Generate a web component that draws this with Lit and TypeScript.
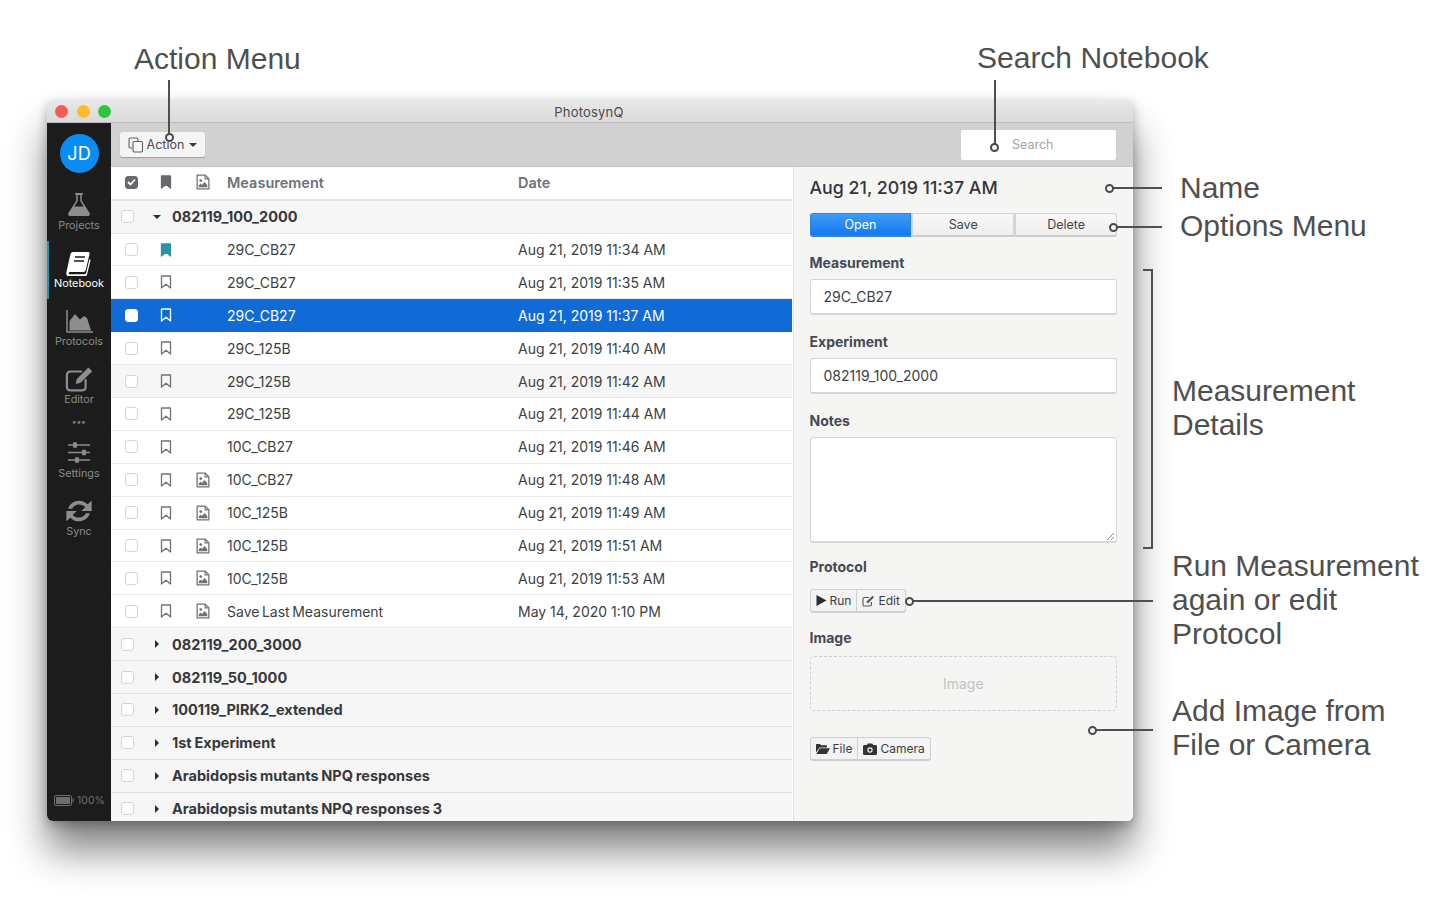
import {LitElement, html, css, svg, nothing} from 'lit';
import {customElement} from 'lit/decorators.js';

const bookmark = (color: string, filled = false) => html`
  <svg class="ico" width="12" height="14" viewBox="0 0 12 14">
    <path d="M1.500 1h9v12L6 9.200 1.500 13z" fill=${filled ? color : 'none'} stroke=${color} stroke-width="1.300" stroke-linejoin="round"/>
  </svg>`;

const imageFile = (color = '#6f7277') => html`
  <svg class="ico" width="14" height="16" viewBox="0 0 13 15">
    <path d="M1 1h7.500L12 4.500V14H1z" fill="none" stroke=${color} stroke-width="1.200"/>
    <path d="M8.500 1v3.500H12" fill="none" stroke=${color} stroke-width="1.100"/>
    <circle cx="4.400" cy="6.200" r="1.300" fill=${color}/>
    <path d="M2.500 12.500V10.800L4.200 9l1.300 1.200L8 7.600l2.500 2.600v2.300z" fill=${color}/>
  </svg>`;

const checkbox = (kind = '') => html`<span class="cb ${kind}"></span>`;

interface Row { name: string; date: string; mark?: boolean; img?: boolean; sel?: boolean; alt?: boolean; }

const ROWS: Row[] = [
  {name: '29C_CB27', date: 'Aug 21, 2019 11:34 AM', mark: true},
  {name: '29C_CB27', date: 'Aug 21, 2019 11:35 AM'},
  {name: '29C_CB27', date: 'Aug 21, 2019 11:37 AM', sel: true},
  {name: '29C_125B', date: 'Aug 21, 2019 11:40 AM'},
  {name: '29C_125B', date: 'Aug 21, 2019 11:42 AM', alt: true},
  {name: '29C_125B', date: 'Aug 21, 2019 11:44 AM'},
  {name: '10C_CB27', date: 'Aug 21, 2019 11:46 AM'},
  {name: '10C_CB27', date: 'Aug 21, 2019 11:48 AM', img: true},
  {name: '10C_125B', date: 'Aug 21, 2019 11:49 AM', img: true},
  {name: '10C_125B', date: 'Aug 21, 2019 11:51 AM', img: true},
  {name: '10C_125B', date: 'Aug 21, 2019 11:53 AM', img: true},
  {name: 'Save Last Measurement', date: 'May 14, 2020 1:10 PM', img: true},
];

const GROUPS = [
  '082119_200_3000',
  '082119_50_1000',
  '100119_PIRK2_extended',
  '1st Experiment',
  'Arabidopsis mutants NPQ responses',
  'Arabidopsis mutants NPQ responses 3',
];

const NAV = [
  {label: 'Projects', icon: svg`<path d="M10 1h8v1.600h-1.200v6.200L24.600 21c.9 1.500 0 3-1.700 3H5.100c-1.700 0-2.600-1.500-1.700-3l7.800-12.200V2.600H10z" fill="#8d8d8d"/><path d="M12.700 3v6.300L9.300 14.500h9.400L15.300 9.300V3z" fill="#1c1c1c"/>`},
  {label: 'Notebook', active: true, icon: svg`<path d="M8 2h15c1.300 0 1.800 1 1.500 2.200l-3.700 15.500c-.4 1.500-1.300 2.300-3 2.300H5.500c-2 0-2.700 1.800-1 2.200h14.700c1 0 1.700-.5 2-1.500l3.200-13.400 1.200.8-3.400 14c-.4 1.700-1.500 2.700-3.300 2.700H5c-3 0-4.200-2.400-3.500-5L5.300 4.800C5.700 3 6.500 2 8 2z" fill="#fff"/><path d="M10 7h10M9 11h10" stroke="#1c1c1c" stroke-width="1.500"/>`},
  {label: 'Protocols', icon: svg`<path d="M2 2v22h26" fill="none" stroke="#8d8d8d" stroke-width="1.500"/><path d="M4.500 22.500V13L10 6l5 5.500 4-3.500 3 2 4 12.500z" fill="#8d8d8d"/>`},
  {label: 'Editor', icon: svg`<g transform="translate(-1.400 -1.300) scale(1.100)"><path d="M20 14v6c0 2-1.300 3.300-3.300 3.300H6.300C4.300 23.300 3 22 3 20V9.500c0-2 1.300-3.300 3.300-3.300H16" fill="none" stroke="#8d8d8d" stroke-width="2" stroke-linecap="round"/><path d="M22.500 2.500l3.500 3.500-10.500 10.500-4.500 1 1-4.500z" fill="#8d8d8d"/></g>`},
  {label: 'dots'},
  {label: 'Settings', icon: svg`<path d="M3 5h22M3 12.500h22M3 20h22" stroke="#8d8d8d" stroke-width="1.700"/><rect x="8" y="2.300" width="4" height="5.400" rx=".8" fill="#8d8d8d"/><rect x="17" y="9.800" width="4" height="5.400" rx=".8" fill="#8d8d8d"/><rect x="10" y="17.300" width="4" height="5.400" rx=".8" fill="#8d8d8d"/>`},
  {label: 'Sync', icon: svg`<g transform="translate(-2.100 -1.950) scale(1.150)"><path d="M4.500 11C6 6.500 10 4 14 4c3 0 5.500 1.200 7.500 3.200L25 4v9h-9l3.500-3.400C18 8 16.200 7.300 14 7.300c-2.800 0-5 1.500-6 3.700zM23.500 15c-1.500 4.500-5.500 7-9.500 7-3 0-5.500-1.200-7.500-3.200L3 22v-9h9l-3.500 3.400C10 18 11.800 18.700 14 18.700c2.800 0 5-1.500 6-3.700z" fill="#8d8d8d"/></g>`},
];

@customElement('app-root')
export class AppRoot extends LitElement {
  static styles = css`
    :host {
      display: block;
      position: relative;
      width: 1440px;
      height: 900px;
      padding: 100px 0 0 47px;
      box-sizing: border-box;
      background: #fff;
      overflow: hidden;
      font-family: Inter, 'Liberation Sans', sans-serif;
      color: #3a3d42;
      -webkit-font-smoothing: antialiased;
    }
    .window {
      width: 1086px;
      height: 721px;
      border-radius: 6px;
      overflow: hidden;
      display: flex;
      flex-direction: column;
      background: #f5f5f4;
      box-shadow: 0 30px 38px rgba(0, 0, 0, 0.48), 0 4px 12px rgba(0, 0, 0, 0.28);
    }
    .titlebar {
      height: 23px;
      flex: none;
      position: relative;
      background: linear-gradient(#e9e9e9, #d9d9d9);
      border-bottom: 1px solid #bdbdbd;
      box-sizing: border-box;
      text-align: center;
      font-size: 13px;
      line-height: 24px;
      color: #4a4a4a;
      letter-spacing: 0.2px;
      padding-right: 2px;
    }
    .lights { position: absolute; left: 8px; top: 5px; display: flex; gap: 8.500px; }
    .lights i { width: 13px; height: 13px; border-radius: 50%; display: block; }
    .body { flex: 1; display: flex; min-height: 0; }
    .side {
      width: 64px;
      flex: none;
      background: #1c1c1c;
      display: flex;
      flex-direction: column;
      align-items: center;
      position: relative;
      padding-top: 11px;
      box-sizing: border-box;
    }
    .avatar {
      width: 39px;
      height: 39px;
      border-radius: 50%;
      background: #0a8cf5;
      color: #fff;
      font-size: 18px;
      display: flex;
      align-items: center;
      justify-content: center;
      margin-bottom: 16px;
    }
    .nav {
      width: 64px;
      height: 58px;
      box-sizing: border-box;
      display: flex;
      flex-direction: column;
      align-items: center;
      gap: 1px;
      font-size: 10.800px;
      color: #8a8a8a;
      padding-top: 3px;
      position: relative;
    }
    .nav svg { display: block; }
    .nav.active { color: #fff; }
    .nav.active::before {
      content: '';
      position: absolute;
      left: 0;
      top: -6px;
      width: 2px;
      height: 58px;
      background: #2a93a8;
    }
    .dots { height: 19px; margin-top: -3px; color: #7c7c7c; font-size: 9px; line-height: 8px; letter-spacing: 0.4px; font-weight: 700; }
    .battery {
      position: absolute;
      bottom: 14px;
      left: 7px;
      display: flex;
      align-items: center;
      gap: 3px;
      font-size: 10.500px;
      color: #6d6d6d;
    }
    .main { flex: 1; display: flex; flex-direction: column; min-width: 0; }
    .toolbar {
      height: 44px;
      flex: none;
      box-sizing: border-box;
      background: #d1d1d1;
      border-bottom: 1px solid #c4c4c4;
      display: flex;
      align-items: center;
      justify-content: space-between;
      padding: 0 17px 0 9px;
    }
    .action {
      height: 25px;
      width: 85px;
      box-sizing: border-box;
      border-radius: 3px;
      background: #f5f5f5;
      box-shadow: 0 1px 1px rgba(0, 0, 0, 0.25);
      display: flex;
      align-items: center;
      justify-content: center;
      gap: 3px;
      font-size: 12.500px;
      color: #4c4c4c;
    }
    .caret { width: 0; height: 0; border: 4.500px solid transparent; border-top-color: #3c3c3c; border-bottom: 0; margin-left: 2px; }
    .search {
      width: 155px;
      height: 30px;
      background: #fff;
      border-radius: 2px;
      box-sizing: border-box;
      font-size: 12.500px;
      color: #a3a3a3;
      line-height: 30px;
      padding-left: 51px;
    }
    .content { flex: 1; display: flex; min-height: 0; }
    .list { width: 682px; flex: none; background: #fff; overflow: hidden; padding-right: 1px; box-sizing: border-box; }
    .row {
      height: 32.900px;
      box-sizing: border-box;
      display: grid;
      grid-template-columns: 116px 291px 1fr;
      align-items: center;
      border-bottom: 1px solid #e8e8e8;
      font-size: 14px;
      color: #3c3f44;
    }
    .row .name { word-spacing: -1.400px; }
    .row.alt { background: #f6f6f6; }
    .row.sel { background: #116bd6; color: #fff; border-bottom-color: #116bd6; }
    .head {
      height: 33.700px;
      padding-bottom: 1px;
      border-bottom: 2px solid #e4e4e4;
      color: #6e7177;
      font-weight: 600;
      font-size: 14.500px;
    }
    .icons { display: flex; align-items: center; padding-left: 14px; }
    .icons .slot1 { width: 14px; display: flex; }
    .icons .slot2 { width: 36px; margin-left: 21px; display: flex; }
    .icons .slot3 { width: 16px; display: flex; }
    .group {
      height: 32.900px;
      box-sizing: border-box;
      display: flex;
      align-items: center;
      background: #f6f6f6;
      border-bottom: 1px solid #e2e2e2;
      font-weight: 700;
      font-size: 14.500px;
      word-spacing: -0.700px;
      color: #35383c;
      padding-left: 10px;
    }
    .group .arrow { width: 14px; margin-left: 16px; margin-right: 8px; display: flex; justify-content: center; }
    .down { width: 0; height: 0; border: 4.500px solid transparent; border-top-color: #2c2c2c; border-bottom: 0; }
    .right { width: 0; height: 0; border: 4.500px solid transparent; border-left-color: #2c2c2c; border-right: 0; }
    .cb {
      width: 13px;
      height: 13px;
      box-sizing: border-box;
      border: 1px solid #d4d4d4;
      border-radius: 3px;
      background: #fff;
      display: block;
    }
    .cb.on { background: #fff; border-color: #fff; }
    .cb.checked {
      background: #66696e;
      border-color: #66696e;
      display: flex;
      align-items: center;
      justify-content: center;
    }
    .ico { display: block; flex: none; }
    .detail {
      flex: 1;
      background: #f5f5f4;
      border-left: 1px solid #dedede;
      padding: 10px 16px 0 15.500px;
      box-sizing: border-box;
      min-width: 0;
    }
    h1 { margin: 0 0 14px; font-size: 17.800px; line-height: 22px; font-weight: 500; color: #33363a; }
    .segs { display: flex; height: 24px; margin-bottom: 17px; font-size: 12.500px; }
    .segs span {
      flex: 1;
      display: flex;
      align-items: center;
      justify-content: center;
      background: linear-gradient(#f8f8f8, #eeeeee);
      border: 1px solid #d5d5d5;
      border-bottom: 2px solid #cccccc;
      color: #444;
      box-sizing: border-box;
    }
    .segs span + span { border-left-width: 2px; }
    .segs .open { background: linear-gradient(#3d9bfa, #1479ee); color: #fff; border-color: #2d84e4; border-radius: 3px 0 0 3px; }
    .segs span:last-child { border-radius: 0 3px 3px 0; }
    label { display: block; font-size: 14px; line-height: 18px; font-weight: 700; color: #454953; }
    .input {
      height: 36px;
      margin-top: 7px;
      margin-bottom: 18px;
      box-sizing: border-box;
      background: #fff;
      border: 1px solid #d6d6d6;
      border-bottom-width: 2px;
      border-radius: 3px;
      padding-left: 13px;
      font-size: 14px;
      line-height: 34px;
      color: #3e4146;
    }
    .notes { position: relative; height: 106px; margin-top: 7px; margin-bottom: 15px; }
    .grip { position: absolute; right: 1px; bottom: 0; }
    .btns { display: inline-flex; height: 24px; font-size: 12px; color: #3d3d3d; border: 1px solid #cfcfcf; border-bottom-width: 2px; border-radius: 3px; box-sizing: border-box; background: #f3f3f3; }
    .btns span { display: flex; align-items: center; gap: 3px; padding: 0 5px; }
    .btns span + span { border-left: 1px solid #cfcfcf; }
    .proto { margin-top: 13px; margin-bottom: 16px; }
    .drop {
      height: 55px;
      margin-top: 9px;
      border: 1px dashed #cfcfcf;
      border-radius: 4px;
      box-sizing: border-box;
      display: flex;
      align-items: center;
      justify-content: center;
      font-size: 14px;
      color: #c3c3c3;
      margin-bottom: 26px;
    }
    .callout { position: absolute; font-family: 'Liberation Sans', Arial, sans-serif; font-size: 30px; line-height: 34px; color: #4f4f4f; white-space: nowrap; }
    .line { position: absolute; background: #4f4f4f; }
    .dot { position: absolute; width: 5px; height: 5px; border: 2px solid #4a4a4a; border-radius: 50%; background: #f5f5f5; }
    .bracket { position: absolute; left: 1143px; top: 269px; width: 10px; height: 280px; border: 2px solid #4f4f4f; border-left: 0; box-sizing: border-box; }
  `;

  private _nav(n: (typeof NAV)[number]) {
    if (n.label === 'dots') return html`<div class="dots">•••</div>`;
    return html`
      <div class="nav ${n.active ? 'active' : ''}">
        <svg width="28" height="26" viewBox="0 0 28 26">${n.icon}</svg>
        <span>${n.label}</span>
      </div>`;
  }

  private _row(r: Row) {
    const c = r.sel ? '#fff' : '#6f7277';
    return html`
      <div class="row ${r.sel ? 'sel' : ''} ${r.alt ? 'alt' : ''}">
        <div class="icons">
          <span class="slot1">${checkbox(r.sel ? 'on' : '')}</span>
          <span class="slot2">${r.mark ? bookmark('#2a93a8', true) : bookmark(c)}</span>
          <span class="slot3">${r.img ? imageFile() : nothing}</span>
        </div>
        <span class="name">${r.name}</span>
        <span>${r.date}</span>
      </div>`;
  }

  render() {
    return html`
      <div class="window">
        <div class="titlebar">
          <div class="lights"><i style="background:#f25f57"></i><i style="background:#fbbc2e"></i><i style="background:#29c73f"></i></div>
          PhotosynQ
        </div>
        <div class="body">
          <div class="side">
            <div class="avatar">JD</div>
            ${NAV.map((n) => this._nav(n))}
            <div class="battery">
              <svg width="20" height="11" viewBox="0 0 20 11"><rect x=".5" y=".5" width="17" height="10" rx="1.500" fill="none" stroke="#6d6d6d"/><rect x="2" y="2" width="14" height="7" fill="#6d6d6d"/><rect x="18.500" y="3.500" width="1.200" height="4" fill="#6d6d6d"/></svg>
              100%
            </div>
          </div>
          <div class="main">
            <div class="toolbar">
              <div class="action">
                <svg width="16" height="16" viewBox="0 0 16 16" fill="none" stroke="#5c5c5c" stroke-width="1.100"><path d="M4 11H2.500C1.700 11 1 10.300 1 9.500v-7C1 1.700 1.700 1 2.500 1h6C9.300 1 10 1.700 10 2.500V4"/><rect x="5" y="4.500" width="9.500" height="10.500" rx="1.200"/></svg>
                Action<span class="caret"></span>
              </div>
              <div class="search">Search</div>
            </div>
            <div class="content">
              <div class="list">
                <div class="row head">
                  <div class="icons">
                    <span class="slot1"><span class="cb checked"><svg width="9" height="8" viewBox="0 0 9 8"><path d="M1 4l2.500 2.500L8 1.500" fill="none" stroke="#fff" stroke-width="1.800"/></svg></span></span>
                    <span class="slot2">${bookmark('#66696e', true)}</span>
                    <span class="slot3">${imageFile()}</span>
                  </div>
                  <span>Measurement</span>
                  <span>Date</span>
                </div>
                <div class="group">${checkbox()}<span class="arrow"><span class="down"></span></span>082119_100_2000</div>
                ${ROWS.map((r) => this._row(r))}
                ${GROUPS.map((g) => html`<div class="group">${checkbox()}<span class="arrow"><span class="right"></span></span>${g}</div>`)}
              </div>
              <div class="detail">
                <h1>Aug 21, 2019 11:37 AM</h1>
                <div class="segs"><span class="open">Open</span><span>Save</span><span>Delete</span></div>
                <label>Measurement</label>
                <div class="input">29C_CB27</div>
                <label>Experiment</label>
                <div class="input">082119_100_2000</div>
                <label>Notes</label>
                <div class="input notes">
                  <svg class="grip" width="10" height="10" viewBox="0 0 10 10"><path d="M2 9l7-7M6 9l3-3" stroke="#8a8a8a" fill="none"/></svg>
                </div>
                <label>Protocol</label>
                <div class="proto">
                  <div class="btns">
                    <span><svg width="11" height="11" viewBox="0 0 11 11"><path d="M.5 0L10.500 5.500.5 11z" fill="#2c2c2c"/></svg>Run</span>
                    <span><svg width="13" height="12" viewBox="0 0 13 12" fill="none" stroke="#555" stroke-width="1.100"><path d="M9.500 7v2.500c0 .9-.6 1.500-1.500 1.500H2.500C1.600 11 1 10.400 1 9.500V4c0-.9.6-1.500 1.500-1.500H7"/><path d="M10.500.8l1.500 1.500-5.500 5.500-2 .4.400-2z" fill="#555" stroke="none"/></svg>Edit</span>
                  </div>
                </div>
                <label>Image</label>
                <div class="drop">Image</div>
                <div class="btns">
                  <span><svg width="14" height="11" viewBox="0 0 14 11"><path d="M0 2c0-.6.400-1 1-1h3l1 1.300h5c.6 0 1 .4 1 1V4.500H3.500L0 9.500z" fill="#333"/><path d="M3.800 5.300H14L10.700 11H.4z" fill="#333"/></svg>File</span>
                  <span><svg width="14" height="12" viewBox="0 0 14 12"><path d="M1.500 2h2.300L4.800.5h4.400L10.200 2h2.300c.8 0 1.500.7 1.500 1.500v7c0 .8-.7 1.500-1.500 1.500h-11C.7 12 0 11.300 0 10.500v-7C0 2.700.7 2 1.500 2z" fill="#333"/><circle cx="7" cy="7" r="2.700" fill="#f3f3f3"/><circle cx="7" cy="7" r="1.500" fill="#333"/></svg>Camera</span>
                </div>
              </div>
            </div>
          </div>
        </div>
      </div>

      <div class="callout" style="left:134px;top:42px">Action Menu</div>
      <div class="callout" style="left:977px;top:41px">Search Notebook</div>
      <div class="callout" style="left:1180px;top:171px">Name</div>
      <div class="callout" style="left:1180px;top:209px">Options Menu</div>
      <div class="callout" style="left:1172px;top:374px">Measurement<br />Details</div>
      <div class="callout" style="left:1172px;top:549px">Run Measurement<br />again or edit<br />Protocol</div>
      <div class="callout" style="left:1172px;top:694px">Add Image from<br />File or Camera</div>

      <div class="line" style="left:168px;top:80px;width:2px;height:54px"></div>
      <div class="dot" style="left:165px;top:133px"></div>
      <div class="line" style="left:994px;top:80px;width:2px;height:64px"></div>
      <div class="dot" style="left:990px;top:143px"></div>
      <div class="line" style="left:1112px;top:187px;width:50px;height:2px"></div>
      <div class="dot" style="left:1105px;top:184px"></div>
      <div class="line" style="left:1116px;top:226px;width:46px;height:2px"></div>
      <div class="dot" style="left:1109px;top:223px"></div>
      <div class="bracket"></div>
      <div class="line" style="left:913px;top:600px;width:240px;height:2px"></div>
      <div class="dot" style="left:905px;top:597px"></div>
      <div class="line" style="left:1095px;top:729px;width:58px;height:2px"></div>
      <div class="dot" style="left:1088px;top:726px"></div>
    `;
  }
}
